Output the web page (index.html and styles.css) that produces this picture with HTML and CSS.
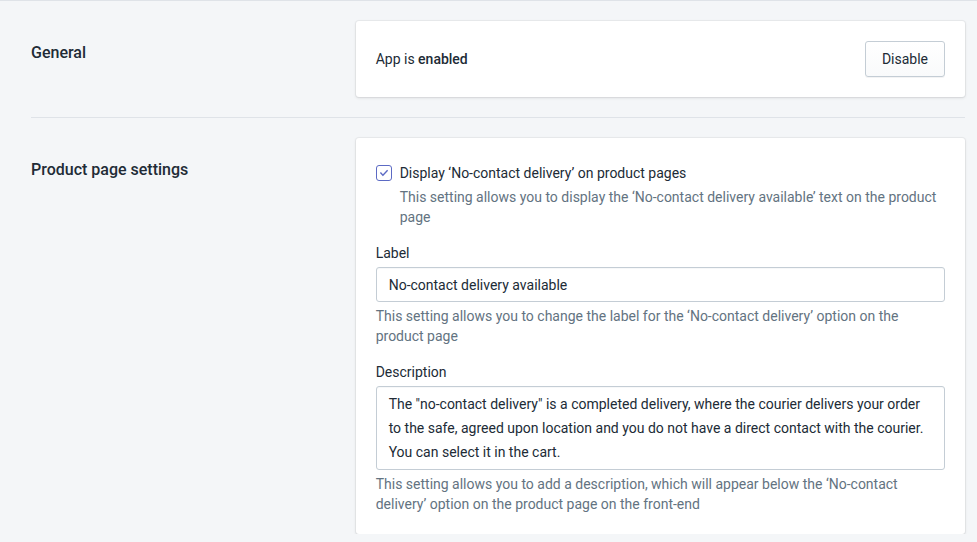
FILE: index.html
```html
<!DOCTYPE html>
<html lang="en">

<head>
  <meta charset="UTF-8" />
  <meta name="viewport" content="width=device-width, initial-scale=1.0" />
  <title>No-contact delivery settings</title>
  <link rel="stylesheet" href="styles.css">
</head>

<body>
  <div class="page">
    <!-- general -->
    <div class="section">
      <div class="annotation">
        <h2>General</h2>
      </div>
      <div class="card">
        <div class="card-row">
          <p>App is <b>enabled</b></p>
          <button class="btn">Disable</button>
        </div>
      </div>
    </div>

    <div class="divider"></div>

    <!-- product page -->
    <div class="section">
      <div class="annotation">
        <h2>Product page settings</h2>
      </div>
      <div class="card">
        <label class="choice">
          <span class="checkbox">
            <svg viewBox="0 0 20 20" width="16" height="16">
              <path d="M8.315 13.859l-3.182-3.417a.506.506 0 0 1 0-.684l.643-.683a.437.437 0 0 1 .642 0l2.22 2.393 4.942-5.327a.436.436 0 0 1 .643 0l.643.684a.504.504 0 0 1 0 .683l-5.91 6.35a.437.437 0 0 1-.642 0" />
            </svg>
          </span>
          <span>Display ‘No-contact delivery’ on product pages</span>
        </label>
        <p class="help indent">This setting allows you to display the ‘No-contact delivery available’ text on the product page</p>

        <div class="field">
          <div class="label">Label</div>
          <input class="input" type="text" value="No-contact delivery available" />
          <p class="help">This setting allows you to change the label for the ‘No-contact delivery’ option on the product page</p>
        </div>

        <div class="field">
          <div class="label">Description</div>
          <textarea class="input area" rows="3">The "no-contact delivery" is a completed delivery, where the courier delivers your order to the safe, agreed upon location and you do not have a direct contact with the courier. You can select it in the cart.</textarea>
          <p class="help">This setting allows you to add a description, which will appear below the ‘No-contact delivery’ option on the product page on the front-end</p>
        </div>
      </div>
    </div>
  </div>
</body>

</html>
```

FILE: styles.css
```css
* {
  margin: 0;
  padding: 0;
  box-sizing: border-box;
}

body {
  background: #f4f6f8;
  border-top: 1px solid #dfe3e8;
  color: #212b36;
  font: 14px/20px Roboto, "Segoe UI", sans-serif;
}

.page {
  padding: 20px 12px 0 31px;
}

.section {
  display: grid;
  grid-template-columns: 1fr 2fr;
  column-gap: 20px;
}

.annotation h2 {
  padding-top: 20px;
  font-size: 16px;
  line-height: 24px;
  font-weight: 500;
}

.card {
  background: #fff;
  border-radius: 3px;
  box-shadow: 0 0 0 1px rgba(63, 63, 68, 0.05), 0 1px 3px 0 rgba(63, 63, 68, 0.15);
  padding: 20px;
}

.card-row {
  display: flex;
  align-items: center;
  justify-content: space-between;
}

.card-row b {
  font-weight: 500;
}

.btn {
  height: 36px;
  padding: 0 16px;
  min-width: 80px;
  border: 1px solid #c4cdd5;
  border-radius: 3px;
  background: linear-gradient(180deg, #fff, #f9fafb);
  box-shadow: 0 1px 0 0 rgba(22, 29, 37, 0.05);
  color: #212b36;
  font: 14px/20px Roboto, "Segoe UI", sans-serif;
  cursor: pointer;
}

.divider {
  border-top: 1px solid #dfe3e8;
  margin: 20px 0;
}

.choice {
  display: flex;
  align-items: center;
  gap: 8px;
  margin-top: 5px;
}

.checkbox {
  width: 16px;
  height: 16px;
  border: 1px solid #5c6ac4;
  border-radius: 3px;
  display: flex;
  align-items: center;
  justify-content: center;
  fill: #5c6ac4;
}

.checkbox svg {
  width: 16px;
  height: 16px;
  flex-shrink: 0;
}

.help {
  color: #637381;
}

.indent {
  padding-left: 24px;
  margin-top: 4px;
}

.field {
  margin-top: 16px;
}

.label {
  margin-bottom: 4px;
}

.input {
  display: block;
  width: 100%;
  height: 35px;
  border: 1px solid #c4cdd5;
  border-radius: 3px;
  padding: 5px 12px;
  font: 14px/24px Roboto, "Segoe UI", sans-serif;
  color: #212b36;
  background: #fff;
  box-shadow: inset 0 1px 0 0 rgba(99, 115, 129, 0.05);
  outline: none;
  margin-bottom: 4px;
}

.area {
  height: 84px;
  resize: none;
  overflow: hidden;
}
```
